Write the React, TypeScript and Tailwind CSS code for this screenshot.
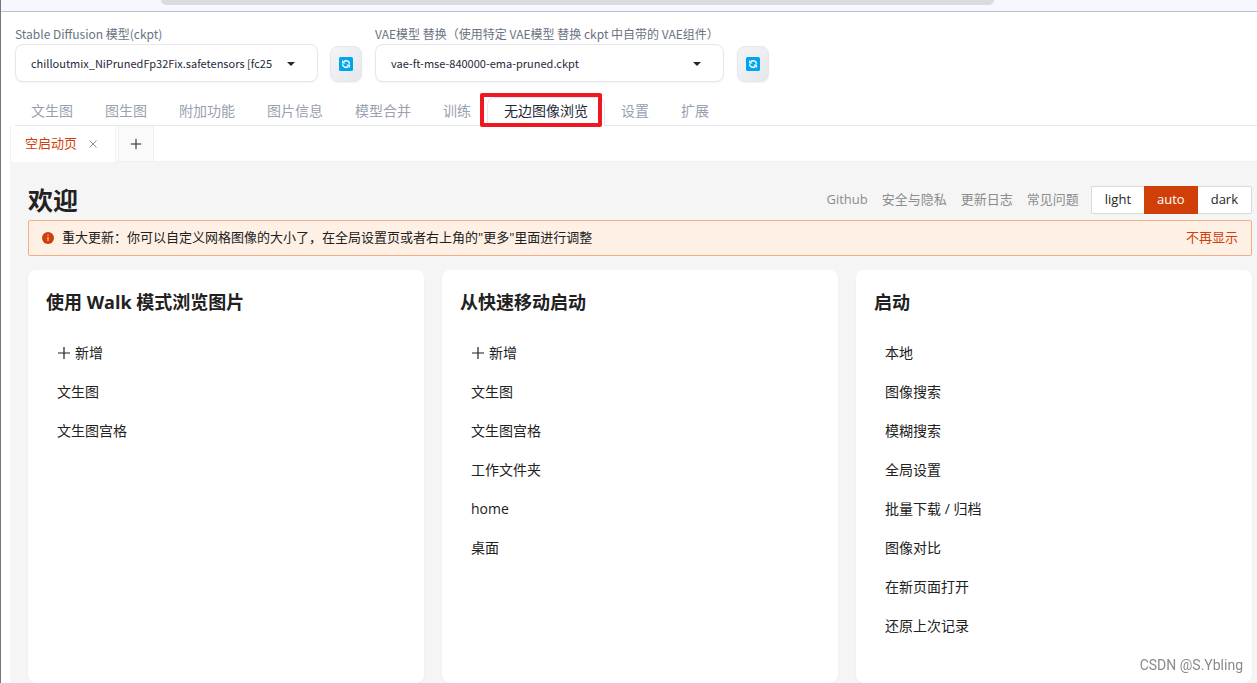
import React, { useState } from 'react';
import { clsx } from 'clsx';

const gradioFont = 'font-["Noto_Sans_CJK_SC",sans-serif]';
const panelFont = 'font-["Open_Sans","Noto_Sans_CJK_SC",sans-serif]';

const mainTabs = ['文生图', '图生图', '附加功能', '图片信息', '模型合并', '训练', '无边图像浏览', '设置', '扩展'];
const helpLinks = ['Github', '安全与隐私', '更新日志', '常见问题'];
const themes = ['light', 'auto', 'dark'];

const cards = [
  { title: '使用 Walk 模式浏览图片', canAdd: true, items: ['文生图', '文生图宫格'] },
  { title: '从快速移动启动', canAdd: true, items: ['文生图', '文生图宫格', '工作文件夹', 'home', '桌面'] },
  {
    title: '启动',
    canAdd: false,
    items: ['本地', '图像搜索', '模糊搜索', '全局设置', '批量下载 / 归档', '图像对比', '在新页面打开', '还原上次记录'],
  },
];

const PlusIcon = ({ className }: { className?: string }) => (
  <svg viewBox="0 0 14 14" className={className} fill="none" stroke="currentColor" strokeWidth="1.2" aria-hidden="true">
    <path d="M7 1v12M1 7h12" />
  </svg>
);

const RefreshButton = ({ label }: { label: string }) => (
  <button
    type="button"
    aria-label={label}
    className="flex h-9 w-8 shrink-0 items-center justify-center rounded-lg border border-gray-200 bg-linear-to-br from-gray-100 to-gray-200 shadow-xs"
  >
    <svg viewBox="0 0 14 14" className="size-3.5" aria-hidden="true">
      <rect width="14" height="14" rx="1.5" fill="#00a6ed" />
      <g fill="none" stroke="#fff" strokeWidth="1.5">
        <path d="M5 4.4C7 2.9 10.2 3.8 10.4 6.8" />
        <path d="M9 9.6C7 11.1 3.8 10.2 3.6 7.2" />
      </g>
      <path d="M3 3v3.4h3.6zM11 11V7.6H7.4z" fill="#fff" />
    </svg>
  </button>
);

interface ModelSelectProps {
  id: string;
  label: string;
  value: string;
  className: string;
}

const ModelSelect: React.FC<ModelSelectProps> = ({ id, label, value, className }) => (
  <div className={className}>
    <label htmlFor={id} className="block text-xs leading-5 whitespace-nowrap text-gray-500">
      {label}
    </label>
    <div className="relative">
      <select
        id={id}
        className="block h-[38px] w-full appearance-none rounded-lg border border-gray-200 bg-white pr-8 pl-[15px] text-[11px] text-gray-800 shadow-xs"
      >
        <option>{value}</option>
      </select>
      <svg
        viewBox="0 0 8 4"
        className="pointer-events-none absolute top-[18px] right-[23px] h-1 w-2 text-gray-800"
        aria-hidden="true"
      >
        <path d="M0 0h8L4 4z" fill="currentColor" />
      </svg>
    </div>
  </div>
);

const ThemeSwitch = () => {
  const [theme, setTheme] = useState('auto');

  return (
    <div role="radiogroup" aria-label="theme" className="flex h-7 text-[13px]">
      {themes.map((name) => (
        <label
          key={name}
          className={clsx(
            'relative flex cursor-pointer items-center border-y px-[13px] first:rounded-l-xs first:border-l last:rounded-r-xs last:border-r',
            theme === name ? 'border-[#d03f0a] bg-[#d03f0a] text-white' : 'border-[#d9d9d9] bg-white text-[#262626]'
          )}
        >
          <input
            type="radio"
            name="theme"
            value={name}
            checked={theme === name}
            onChange={() => setTheme(name)}
            className="sr-only"
          />
          {name}
        </label>
      ))}
    </div>
  );
};

const App = () => {
  const [activeTab, setActiveTab] = useState('无边图像浏览');
  const [showNotice, setShowNotice] = useState(true);

  return (
    <div className={clsx('flex min-h-screen flex-col border-l border-[#77777b] bg-white', gradioFont)}>
      {/* Lower edge of the browser toolbar */}
      <div className="h-3 shrink-0 border-b border-[#bfc0d3] bg-[#f5f8fe] pr-[263px] pl-40">
        <div className="h-[5px] rounded-b-full bg-[#dadbe0]" />
      </div>

      {/* Model pickers */}
      <div className="flex items-end pt-3 pl-3.5">
        <ModelSelect
          id="sd-model"
          label="Stable Diffusion 模型(ckpt)"
          value="chilloutmix_NiPrunedFp32Fix.safetensors [fc25"
          className="w-[303px]"
        />
        <div className="mr-[13px] ml-3">
          <RefreshButton label="刷新模型" />
        </div>
        <ModelSelect
          id="vae-model"
          label="VAE模型 替换（使用特定 VAE模型 替换 ckpt 中自带的 VAE组件）"
          value="vae-ft-mse-840000-ema-pruned.ckpt"
          className="w-[349px]"
        />
        <div className="ml-[13px]">
          <RefreshButton label="刷新 VAE" />
        </div>
      </div>

      {/* Main tabs */}
      <div role="tablist" className="mt-[15px] ml-3.5 flex h-[29px] border-b border-gray-200 text-sm">
        {mainTabs.map((tab) => {
          const selected = tab === activeTab;
          return (
            <button
              key={tab}
              type="button"
              role="tab"
              aria-selected={selected}
              onClick={() => setActiveTab(tab)}
              className={clsx(
                'relative h-[29px] px-4 pb-1',
                selected ? 'rounded-t-lg border border-b-0 border-gray-200 bg-white text-gray-800' : 'text-gray-400'
              )}
            >
              {tab}
              {selected && (
                <span className="absolute -top-[5px] right-0.5 -bottom-px -left-2 rounded-xs border-4 border-[#f01820]" />
              )}
            </button>
          );
        })}
      </div>

      <div className={clsx('ml-[9px] flex flex-1 flex-col text-[#212121]', panelFont)}>
        {/* Page tabs */}
        <div className="flex h-9 gap-0.5 border-b border-[#f0f0f0] text-[13px]">
          <div className="flex h-9 items-center gap-3 border-x border-[#f0f0f0] bg-white px-3.5 text-[#d03f0a]">
            <button type="button">空启动页</button>
            <button type="button" aria-label="关闭" className="pr-1 text-[#8c8c8c]">
              <svg viewBox="0 0 8 8" className="size-2" fill="none" stroke="currentColor" aria-hidden="true">
                <path d="M0.5 0.5l7 7M7.5 0.5l-7 7" />
              </svg>
            </button>
          </div>
          <button
            type="button"
            aria-label="添加"
            className="flex w-9 items-center justify-center border-x border-[#f0f0f0] bg-[#fafafa]"
          >
            <PlusIcon className="size-3" />
          </button>
        </div>

        <main className="flex flex-1 flex-col bg-[#f5f5f5] pt-6 pr-[5px] pl-[18px]">
          <header className="flex h-7 items-center">
            <h1 className="text-[25px] leading-7 font-bold">欢迎</h1>
            <nav className="mr-3 ml-auto flex gap-3.5 text-[13px] text-[#8c8c8c]">
              {helpLinks.map((link) => (
                <a key={link} href="#">
                  {link}
                </a>
              ))}
            </nav>
            <ThemeSwitch />
          </header>

          {showNotice && (
            <div
              role="alert"
              className="mt-1.5 flex h-9 items-center rounded-xs border border-[#f9ad84] bg-[#fff0e6] px-[13px] text-[13px]"
            >
              <svg viewBox="0 0 12 12" className="mr-2 size-3" aria-hidden="true">
                <circle cx="6" cy="6" r="6" fill="#d03f0a" />
                <path d="M6 5v4M6 2.8v1.1" stroke="#fff0e6" />
              </svg>
              <p>重大更新：你可以自定义网格图像的大小了，在全局设置页或者右上角的"更多"里面进行调整</p>
              <button type="button" onClick={() => setShowNotice(false)} className="ml-auto text-[#d03f0a]">
                不再显示
              </button>
            </div>
          )}

          <div className="mt-3.5 grid flex-1 grid-cols-3 gap-[18px]">
            {cards.map((card) => (
              <section key={card.title} className="rounded-lg bg-white px-[18px] py-4 shadow-xs">
                <h2 className="text-lg leading-8 font-bold">{card.title}</h2>
                <ul className="mt-[15px] text-sm">
                  {card.canAdd && (
                    <li className="px-[11px]">
                      <button type="button" className="flex h-[39px] items-center gap-1">
                        <PlusIcon className="size-3.5" />
                        新增
                      </button>
                    </li>
                  )}
                  {card.items.map((item) => (
                    <li key={item} className="px-[11px]">
                      <button type="button" className="block h-[39px]">
                        {item}
                      </button>
                    </li>
                  ))}
                </ul>
              </section>
            ))}
          </div>
        </main>
      </div>

      <div className="fixed right-3.5 bottom-2 font-['Roboto',sans-serif] text-sm leading-5 text-[#8a8a8a]">
        CSDN @S.Ybling
      </div>
    </div>
  );
};

export default App;
